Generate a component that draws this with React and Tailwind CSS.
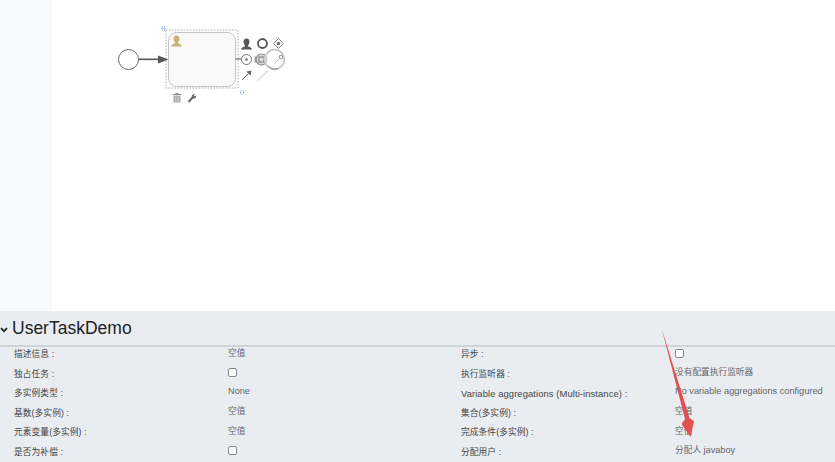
import React from "react";

const FONT = "font-['Liberation_Sans','Noto_Sans_CJK_SC',sans-serif]";

const rows = [
  { label: "描述信息 :", value: "空值", label2: "异步 :", check2: true },
  { label: "独占任务 :", check: true, label2: "执行监听器 :", value2: "没有配置执行监听器" },
  {
    label: "多实例类型 :",
    value: <span className="text-[9.2px]">None</span>,
    label2: <span className="text-[9.4px]">Variable aggregations (Multi-instance) :</span>,
    value2: <span className="text-[9.2px]">No variable aggregations configured</span>,
  },
  { label: "基数(多实例) :", value: "空值", label2: "集合(多实例) :", value2: "空值" },
  { label: "元素变量(多实例) :", value: "空值", label2: "完成条件(多实例) :", value2: "空值" },
  {
    label: "是否为补偿 :",
    check: true,
    label2: "分配用户 :",
    value2: <>分配人 <span className="text-[9.2px]">javaboy</span></>,
  },
];

const Checkbox = () => (
  <span className="block w-[9px] h-[9px] rounded-[2px] border border-[#888] bg-white" />
);

const Value = ({ value, check }) => (
  <div className="flex items-center text-[8.7px] text-[#666] whitespace-nowrap -mt-[3px]">
    {check ? <Checkbox /> : <span>{value}</span>}
  </div>
);

const Label = ({ children }) => (
  <div className="flex items-center text-[8.7px] tracking-[0.1px] text-[#444] whitespace-nowrap">
    <span>{children}</span>
  </div>
);

// user silhouette, drawn around 0,0
const UserShape = ({ x, y, fill }) => (
  <path
    transform={`translate(${x} ${y})`}
    fill={fill}
    d="M0 -5.5c-2 0-3 1.5-3 3.3 0 1.6.6 2.6 1.4 3.4v1c-.8.9-3.6 1-3.9 3.3h11c-.3-2.3-3.1-2.4-3.9-3.3v-1c.8-.8 1.4-1.8 1.4-3.4 0-1.8-1-3.3-3-3.3z"
  />
);

const Diagram = () => (
  <svg width="180" height="90" viewBox="112 20 180 90" fill="none">
    {/* start event */}
    <circle cx="128.5" cy="59.5" r="10" fill="#fff" stroke="#666" />
    <path d="M139 59.3H160" stroke="#585858" strokeWidth="1.6" />
    <path d="M158 55.5L168.5 59.5L158 63.5z" fill="#585858" />

    {/* selected user task */}
    <rect x="166" y="30" width="72" height="58" stroke="#aaa" strokeDasharray="1.5 1.5" />
    <rect x="168.5" y="32.5" width="67" height="54" rx="8" fill="#f9f9f9" stroke="#c4c4c4" />
    <UserShape x={176.5} y={41} fill="#c8b27f" />
    <rect x="162" y="27" width="3" height="3" stroke="#6f93d2" strokeDasharray="1 1" />
    <rect x="240.5" y="91" width="3" height="3" stroke="#6f93d2" strokeDasharray="1 1" />
    <path d="M235.5 59H241" stroke="#555" />

    {/* context pad */}
    <UserShape x={246.5} y={44} fill="#555" />
    <circle cx="262.5" cy="43.5" r="4.5" stroke="#555" strokeWidth="1.8" />
    <path d="M278.5 38.5L283.5 43.5L278.5 48.5L273.5 43.5z" stroke="#888" />
    <circle cx="278.5" cy="43.5" r="1.8" fill="#777" />
    <circle cx="246.5" cy="59.5" r="5" stroke="#777" />
    <circle cx="246.5" cy="59.5" r="1.2" fill="#666" />
    <path d="M254.5 56L258 57.5V61.5L254.5 63z" fill="#aaa" />
    <circle cx="261.5" cy="59.5" r="5.5" stroke="#888" strokeWidth="1.2" fill="#ddd" />
    <rect x="259" y="57" width="5" height="5" stroke="#777" />
    <circle cx="274.5" cy="59.5" r="9.8" fill="#fff" fillOpacity="0.5" stroke="#c9c9c9" strokeWidth="1.8" />
    <path d="M268 66a9.8 9.8 0 0 0 10 2.5" stroke="#888" />
    <path d="M274.5 63.5L280 58" stroke="#bbb" />
    <circle cx="281" cy="57" r="1.8" fill="#fff" stroke="#999" />
    <path d="M242 80L248.5 73.5" stroke="#666" />
    <path d="M251.5 70.5L250.5 75.5L246.5 71.5z" fill="#666" />
    <path d="M258 80.5L268 70.5" stroke="#bbb" />

    {/* trash */}
    <path d="M172.5 94.5H181.5M175.5 94.5V93.5H178.5V94.5" stroke="#999" />
    <path d="M173.5 95.5H180.5V102.5H173.5z" fill="#aaa" />
    <path d="M175.5 96.5V101.5M177 96.5V101.5M178.5 96.5V101.5" stroke="#eee" strokeWidth="0.5" />
    {/* wrench */}
    <path d="M188.5 102L193 97" stroke="#666" strokeWidth="2" />
    <path d="M192 97.5a2.6 2.6 0 0 1 3-3.5l-1.3 1.5 1 1 1.5-1.2a2.6 2.6 0 0 1-3.7 3z" fill="#666" />
  </svg>
);

// red annotation arrow on top of the screenshot
const RedArrow = () => (
  <svg className="absolute left-[655px] top-[325px]" width="45" height="115" viewBox="655 325 45 115">
    <path d="M661.5 328L685 419L681.5 424L690.5 437L694 421L689.5 418z" fill="#e0524f" />
  </svg>
);

export default function App() {
  return (
    <div className={`relative h-screen overflow-hidden flex flex-col bg-white ${FONT}`}>
      <div className="flex h-[311px] shrink-0">
        <div className="w-[52px] bg-[#f8f9fa]" />
        <div className="flex-1 pl-[60px] pt-[20px]">
          <Diagram />
        </div>
      </div>

      <div className="flex-1 bg-[#e9edf2]">
        <div className="h-[36px] flex items-center border-b-2 border-[#d0d4d9]">
          <svg width="8" height="6" viewBox="0 0 8 6" className="mr-1 mt-[3px]">
            <path d="M1 1.2L4 4.2L7 1.2" fill="none" stroke="#222" strokeWidth="1.8" />
          </svg>
          <h2 className="text-[17.5px] leading-none text-[#222] mt-[1px]">UserTaskDemo</h2>
        </div>
        <div className="grid grid-cols-[214px_233px_214px_1fr] auto-rows-[19.5px] pl-[14px] mt-[-2px]">
          {rows.map((row, i) => (
            <React.Fragment key={i}>
              <Label>{row.label}</Label>
              <Value value={row.value} check={row.check} />
              <Label>{row.label2}</Label>
              <Value value={row.value2} check={row.check2} />
            </React.Fragment>
          ))}
        </div>
      </div>

      <RedArrow />
    </div>
  );
}
